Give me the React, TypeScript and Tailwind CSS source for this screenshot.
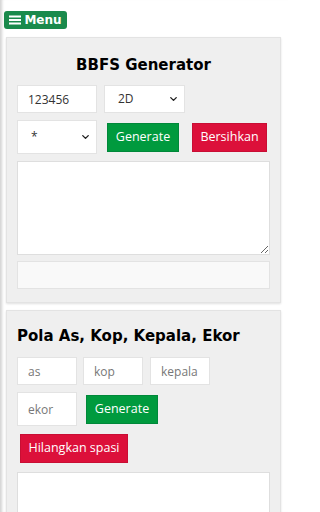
import { ChevronDown } from 'lucide-react';

const font = { fontFamily: '"Open Sans", "Liberation Sans", sans-serif' };
const heading = { fontFamily: '"DejaVu Sans", "Liberation Sans", sans-serif' };

function Select({ value, className }: { value: string; className: string }) {
  return (
    <div className={`relative shrink-0 ${className}`}>
      <select
        defaultValue={value}
        className="w-full h-full appearance-none bg-white border border-[#e3e3e3] pl-[13px] text-[12px] text-[#333] outline-none"
      >
        <option value={value}>{value}</option>
      </select>
      <ChevronDown className="absolute right-[6px] top-1/2 -translate-y-1/2 w-[11px] h-[11px] text-[#222]" strokeWidth={3} />
    </div>
  );
}

function Btn({ label, color, className }: { label: string; color: 'green' | 'red'; className?: string }) {
  const bg = color === 'green' ? 'bg-[#009a3e] border-[#00883a]' : 'bg-[#dc103a] border-[#c80e34]';
  return (
    <button type="button" className={`shrink-0 h-[29px] border ${bg} text-white text-[12.5px] ${className ?? ''}`}>
      {label}
    </button>
  );
}

function Card({ children, className }: { children: React.ReactNode; className?: string }) {
  return (
    <div className={`ml-[6px] w-[275px] bg-[#efefef] border border-[#e3e3e3] shadow-[0_1px_2px_rgba(0,0,0,0.12)] px-[10px] ${className ?? ''}`}>
      {children}
    </div>
  );
}

export default function App() {
  return (
    <div style={font} className="w-[288px] h-[512px] bg-white shadow-[inset_4px_0_3px_-2px_rgba(0,0,0,0.18)] pt-[11px] overflow-hidden">
      <button type="button" className="ml-[4px] h-[18px] w-[63px] rounded-[3px] bg-[#1a8a4c] text-white flex items-center justify-center gap-[3px] text-[12px] font-bold" style={heading}>
        <svg width="12" height="10" viewBox="0 0 12 10">
          <rect x="0" y="0.5" width="12" height="2" fill="white" />
          <rect x="0" y="4" width="12" height="2" fill="white" />
          <rect x="0" y="7.5" width="12" height="2" fill="white" />
        </svg>
        Menu
      </button>

      {/* BBFS Generator */}
      <Card className="mt-[8px] pt-[17px] pb-[13px]">
        <h2 className="text-center text-[15px] font-bold leading-[20px] text-black" style={heading}>
          BBFS Generator
        </h2>
        <div className="mt-[10px] flex gap-[7px]">
          <input defaultValue="123456" className="w-[80px] h-[28px] bg-white border border-[#e3e3e3] px-[10px] text-[12px] text-[#333] outline-none" />
          <Select value="2D" className="w-[81px] h-[28px]" />
        </div>
        <div className="mt-[7px] flex items-center">
          <Select value="*" className="w-[80px] h-[34px]" />
          <Btn label="Generate" color="green" className="ml-[10px] w-[72px]" />
          <Btn label="Bersihkan" color="red" className="ml-[13px] w-[75px]" />
        </div>
        <textarea className="mt-[7px] block w-[253px] h-[94px] bg-white border border-[#dedede] outline-none" />
        <div className="mt-[6px] w-[253px] h-[28px] bg-[#f9f9f9] border border-[#e3e3e3]" />
      </Card>

      {/* Pola As, Kop, Kepala, Ekor */}
      <Card className="mt-[7px] pt-[15px] pb-4">
        <h2 className="text-[15px] font-bold leading-[20px] text-black" style={heading}>
          Pola As, Kop, Kepala, Ekor
        </h2>
        <div className="mt-[11px] flex">
          <input placeholder="as" className="w-[60px] h-[28px] bg-white border border-[#e3e3e3] px-[10px] text-[12px] placeholder:text-[#777] outline-none" />
          <input placeholder="kop" className="ml-[6px] w-[60px] h-[28px] bg-white border border-[#e3e3e3] px-[10px] text-[12px] placeholder:text-[#777] outline-none" />
          <input placeholder="kepala" className="ml-[7px] w-[60px] h-[28px] bg-white border border-[#e3e3e3] px-[10px] text-[12px] placeholder:text-[#777] outline-none" />
        </div>
        <div className="mt-[7px] flex items-center">
          <input placeholder="ekor" className="w-[60px] h-[34px] bg-white border border-[#e3e3e3] px-[10px] text-[12px] placeholder:text-[#777] outline-none" />
          <Btn label="Generate" color="green" className="ml-[9px] w-[72px]" />
        </div>
        <Btn label="Hilangkan spasi" color="red" className="mt-[8px] ml-[3px] w-[108px] block" />
        <textarea className="mt-[9px] block w-[253px] h-[95px] bg-white border border-[#dedede] outline-none" />
      </Card>
    </div>
  );
}
